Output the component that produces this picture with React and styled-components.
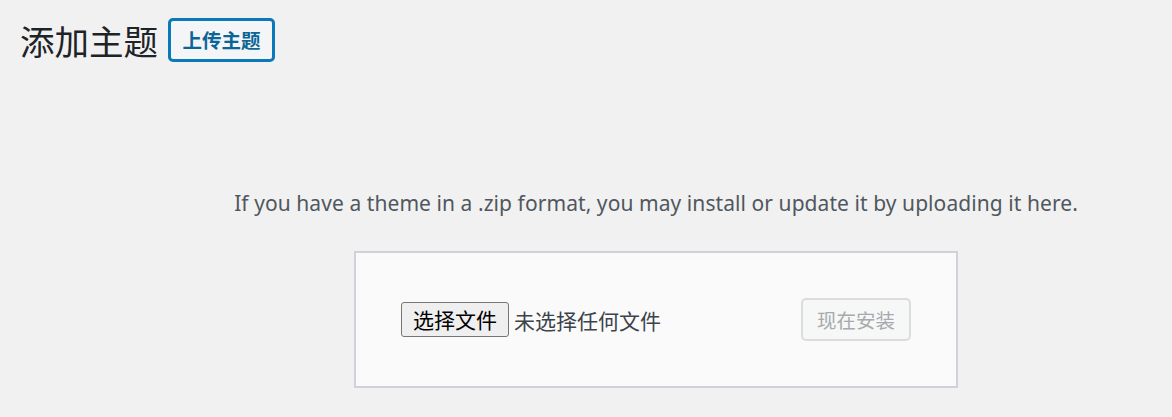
import React from "react";
import styled, { createGlobalStyle } from "styled-components";

const Global = createGlobalStyle`
  html, body { margin: 0; padding: 0; background: #f1f1f1; }
  body {
    font-family: "Noto Sans", "Noto Sans CJK SC", sans-serif;
    color: #3c434a;
    width: 1172px;
    overflow: hidden;
  }
`;

const Wrap = styled.div`
  padding: 0 0 0 20px;
`;

const Header = styled.div`
  display: flex;
  align-items: center;
  gap: 10px;
  padding-top: 18px;
`;

const Title = styled.h1`
  margin: 0;
  font-family: "Noto Sans CJK SC", sans-serif;
  font-size: 34.5px;
  font-weight: 400;
  line-height: 44px;
  color: #1d2327;
`;

const TitleAction = styled.button`
  box-sizing: border-box;
  height: 44px;
  width: 107px;
  padding: 0;
  border: 3px solid #0a79b7;
  border-radius: 5px;
  background: #f3f5f6;
  color: #0b6596;
  font-family: "Noto Sans CJK SC", sans-serif;
  font-size: 19.5px;
  font-weight: 700;
  line-height: 1;
  cursor: pointer;
`;

const UploadSection = styled.section`
  box-sizing: border-box;
  width: 1152px;
  padding: 126px 0 0 120px;
  display: flex;
  flex-direction: column;
  align-items: center;
`;

const Help = styled.p`
  margin: 0;
  font-size: 21px;
  letter-spacing: 0.07px;
  line-height: 30px;
  color: #50575e;
`;

const UploadForm = styled.form`
  box-sizing: border-box;
  margin-top: 33px;
  width: 604px;
  padding: 45px;
  border: 2px solid #cfd2d6;
  background: #fafafa;
  display: flex;
  align-items: center;
`;

const FileButton = styled.button`
  box-sizing: border-box;
  height: 35px;
  width: 108px;
  padding: 0;
  border: 1px solid #767676;
  border-radius: 3px;
  background: #efefef;
  color: #000;
  font-family: "Noto Sans CJK SC", sans-serif;
  font-size: 21px;
  line-height: 1;
`;

const FileName = styled.span`
  margin-left: 5px;
  font-family: "Noto Sans CJK SC", sans-serif;
  font-size: 21px;
  color: #3c434a;
`;

const Submit = styled.button`
  box-sizing: border-box;
  margin-left: auto;
  height: 43px;
  width: 110px;
  padding: 0;
  border: 2px solid #dcdcde;
  border-radius: 5px;
  background: #f6f7f7;
  color: #a7aaad;
  font-family: "Noto Sans CJK SC", sans-serif;
  font-size: 19.5px;
  line-height: 1;
`;

export default function App() {
  return (
    <>
      <Global />
      <Wrap>
        <Header>
          <Title>添加主题</Title>
          <TitleAction type="button">上传主题</TitleAction>
        </Header>
        <UploadSection>
          <Help>
            If you have a theme in a .zip format, you may install or update it by uploading it here.
          </Help>
          <UploadForm onSubmit={(e) => e.preventDefault()}>
            <FileButton type="button">选择文件</FileButton>
            <FileName>未选择任何文件</FileName>
            <Submit type="submit" disabled>
              现在安装
            </Submit>
          </UploadForm>
        </UploadSection>
      </Wrap>
    </>
  );
}
